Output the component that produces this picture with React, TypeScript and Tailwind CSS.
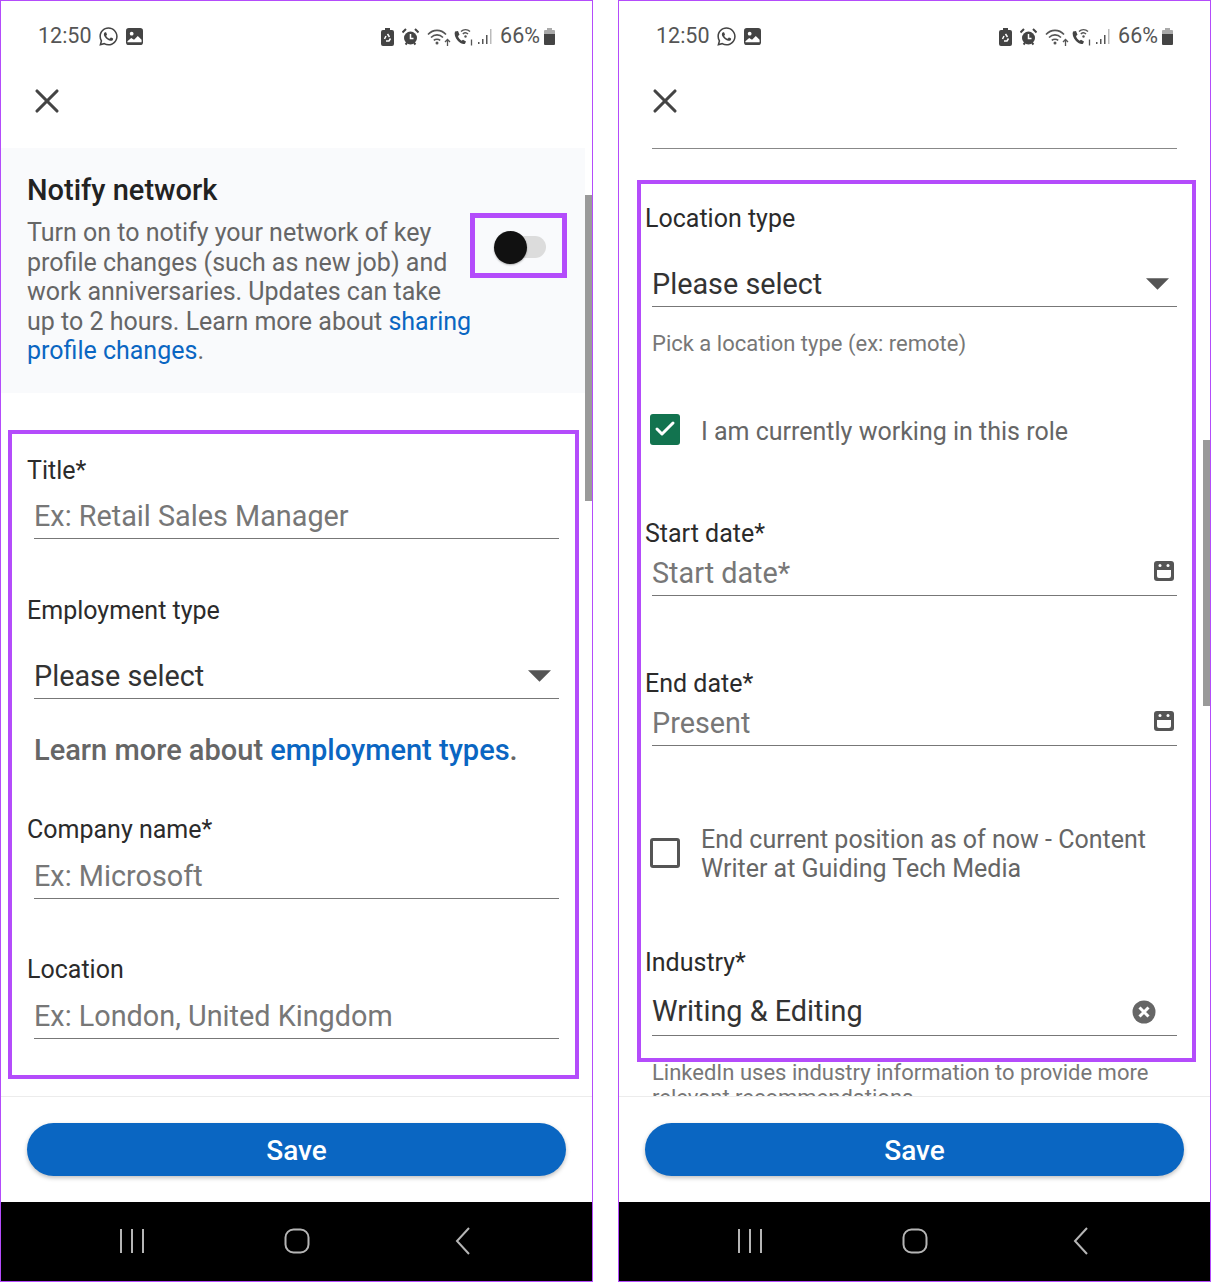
import React from "react"
import { X, Check } from "lucide-react"
import { FaWhatsapp } from "react-icons/fa"

function BatterySaver() {
    return (
        <svg width="13" height="18" viewBox="0 0 13 18">
            <path d="M4 0h5v2h2a2 2 0 0 1 2 2v12a2 2 0 0 1-2 2H2a2 2 0 0 1-2-2V4a2 2 0 0 1 2-2h2z" fill="#444" />
            <path d="M6.500 6l2 3M9.500 10.500l-1.500 2.500H5M3.500 11l1.500-3" stroke="#fff" strokeWidth="1.500" fill="none" />
        </svg>
    )
}

function Alarm() {
    return (
        <svg width="17" height="18" viewBox="0 0 17 18">
            <circle cx="8.500" cy="10" r="6.500" fill="#444" />
            <path d="M0.500 4.500L4 1M16.500 4.500L13 1M3.500 16.500L5 15M13.500 16.500L12 15" stroke="#444" strokeWidth="2" />
            <path d="M8.500 6v4.500h3" stroke="#fff" strokeWidth="1.500" fill="none" />
        </svg>
    )
}

function Wifi() {
    return (
        <svg width="24" height="18" viewBox="0 0 24 18">
            <path d="M1 6.500C6 1 14 1 19 6.500M4 9.500C7.500 6 12.500 6 16 9.500M6.800 12.300C8.500 10.800 11.500 10.800 13.200 12.300" stroke="#555" strokeWidth="1.600" fill="none" />
            <circle cx="10" cy="15" r="1.500" fill="#555" />
            <path d="M20.500 18v-6M18 14l2.500-2.500L23 14" stroke="#555" strokeWidth="1.300" fill="none" />
        </svg>
    )
}

function WifiCall() {
    return (
        <svg width="21" height="18" viewBox="0 0 21 18">
            <path d="M2 3.500C1 6 2 10 5 13c2.500 2.500 5 3.500 7 2.800l1-2.300-3-1.800-1.500 1C7 11.500 5.500 10 5 8l1.500-1.200L5 3z" fill="#444" />
            <path d="M8 3.500C10.500 1 14.500 1 17 3.500M9.800 6C11.300 4.600 13.600 4.600 15 6" stroke="#555" strokeWidth="1.400" fill="none" />
            <circle cx="12.500" cy="8.500" r="1.200" fill="#555" />
            <path d="M18.500 11.500v6" stroke="#555" strokeWidth="1.300" />
        </svg>
    )
}

function Signal() {
    return (
        <svg width="15" height="16" viewBox="0 0 15 16">
            <path d="M1 13h1.500v2H1zM5 10h1.500v5H5zM9 6h1.500v9H9z" fill="#555" />
            <path d="M13 0h1.500v15H13z" fill="#bbb" />
        </svg>
    )
}

function Battery() {
    return (
        <svg width="11" height="17" viewBox="0 0 11 17">
            <path d="M3 0h5v2H3z" fill="#aaa" />
            <path d="M1 2h9a1 1 0 0 1 1 1v3H0V3a1 1 0 0 1 1-1z" fill="#aaa" />
            <path d="M0 6h11v10a1 1 0 0 1-1 1H1a1 1 0 0 1-1-1z" fill="#444" />
        </svg>
    )
}

function Gallery() {
    return (
        <svg width="17" height="17" viewBox="0 0 18 18">
            <rect width="18" height="18" rx="3" fill="#444" />
            <circle cx="6" cy="6" r="2" fill="#fff" />
            <path d="M1.500 14l4-3.500 3 2 4-4 4 4v2.500h-15z" fill="#fff" />
        </svg>
    )
}

function StatusBar() {
    return (
        <div className="h-[71px] shrink-0 flex items-center pl-[37px] pr-[37px] text-[#555]">
            <span className="text-[21.500px]">12:50</span>
            <FaWhatsapp className="ml-[6px] -mt-[1px] text-[#444]" size={21} />
            <span className="ml-[7px] -mt-[1px] flex"><Gallery /></span>
            <div className="ml-auto flex items-center">
                <BatterySaver />
                <span className="ml-[8px] flex"><Alarm /></span>
                <span className="ml-[8px] flex"><Wifi /></span>
                <span className="ml-[2px] flex"><WifiCall /></span>
                <span className="ml-[3px] flex"><Signal /></span>
                <span className="ml-[8px] text-[21.500px]">66%</span>
                <span className="ml-[4px] flex"><Battery /></span>
            </div>
        </div>
    )
}

function Label({ children, className = "" }: { children: React.ReactNode; className?: string }) {
    return <div className={"h-[30px] leading-[32px] text-[25px] text-[#2b2b2b] " + className}>{children}</div>
}

function InputRow({ children, className = "", right }: { children: React.ReactNode; className?: string; right?: React.ReactNode }) {
    return (
        <div className={"h-[44px] flex items-center justify-between border-b border-[#777] text-[28.800px] " + className}>
            <span>{children}</span>
            {right}
        </div>
    )
}

function Caret() {
    return (
        <svg width="23" height="12" viewBox="0 0 24 12" className="mr-[8px] -mt-[1px]">
            <path d="M0 0h24L12 12z" fill="#555" />
        </svg>
    )
}

function CalendarIcon() {
    return (
        <svg width="20" height="20" viewBox="0 0 20 20" className="mr-[3px] -mt-[6px]">
            <path d="M3 0h14a3 3 0 0 1 3 3v14a3 3 0 0 1-3 3H3a3 3 0 0 1-3-3V3a3 3 0 0 1 3-3z" fill="#555" />
            <path d="M3 9h14v6a2 2 0 0 1-2 2H5a2 2 0 0 1-2-2z" fill="#fff" />
            <circle cx="6" cy="4.500" r="1.500" fill="#fff" />
            <circle cx="14" cy="4.500" r="1.500" fill="#fff" />
        </svg>
    )
}

function ClearIcon() {
    return (
        <svg width="24" height="24" viewBox="0 0 24 24" className="mr-[21px]">
            <circle cx="12" cy="12" r="11.500" fill="#666" />
            <path d="M7.500 7.500l9 9M16.500 7.500l-9 9" stroke="#fff" strokeWidth="3" />
        </svg>
    )
}

function Footer() {
    return (
        <div className="shrink-0">
            <div className="h-[106px] border-t border-[#ececec] bg-white px-[26px] pt-[26px]">
                <button className="w-full h-[53px] pt-[2px] rounded-full bg-[#0a66c2] text-white text-[28px] font-medium shadow-[0_2px_4px_rgba(0,0,0,0.25)]" type="button">
                    Save
                </button>
            </div>
            <div className="h-[79px] bg-black flex items-center pl-[118px] pb-[1px]">
                <svg width="26" height="26" viewBox="0 0 26 26">
                    <path d="M2 1v24M13 1v24M24 1v24" stroke="#b5b5b5" strokeWidth="2" />
                </svg>
                <svg width="26" height="26" viewBox="0 0 26 26" className="ml-[139px]">
                    <rect x="1.500" y="1.500" width="23" height="23" rx="8" stroke="#b5b5b5" strokeWidth="2" fill="none" />
                </svg>
                <svg width="16" height="28" viewBox="0 0 16 28" className="ml-[145px]">
                    <path d="M14 1L2 14l12 13" stroke="#b5b5b5" strokeWidth="2" fill="none" />
                </svg>
            </div>
        </div>
    )
}

function Phone({ children, barClass }: { children: React.ReactNode; barClass: string }) {
    return (
        <div className="relative w-[593px] h-[1282px] flex flex-col overflow-hidden border border-[#b44cfb] bg-white">
            <StatusBar />
            <div className="h-[76px] shrink-0 pl-[26px] pt-[9px]">
                <X size={40} strokeWidth={1.900} color="#444" />
            </div>
            <div className="flex-1 min-h-0 overflow-hidden">{children}</div>
            <Footer />
            <div className={"absolute right-0 w-[7px] bg-[#9a9a9a] " + barClass} />
        </div>
    )
}

function LeftForm() {
    return (
        <>
            <section className="h-[245px] mr-[7px] bg-[#f9fafc] flex pl-[26px]">
                <div className="w-[445px] shrink-0 pt-[25px]">
                    <h2 className="h-[34px] leading-[34px] text-[29px] font-medium text-[#222]">Notify network</h2>
                    <p className="mt-[11px] text-[25px] leading-[29.500px] text-[#666] whitespace-nowrap">
                        Turn on to notify your network of key<br />
                        profile changes (such as new job) and<br />
                        work anniversaries. Updates can take<br />
                        up to 2 hours. Learn more about <span className="text-[#0a66c2]">sharing</span><br />
                        <span className="text-[#0a66c2]">profile changes</span>.
                    </p>
                </div>
                <div className="-ml-[2px] mt-[65px] w-[97px] h-[65px] border-[5px] border-[#b44cfb] flex items-center pl-[19px] pt-[3px] shrink-0">
                    <div className="relative w-[52px] h-[33px]">
                        <div className="absolute left-[20px] top-[5px] w-[32px] h-[22px] rounded-full bg-[#dcdcdc]" />
                        <div className="absolute left-0 top-0 w-[33px] h-[33px] rounded-full bg-[#111] shadow-[0_1px_2px_rgba(0,0,0,0.3)]" />
                    </div>
                </div>
            </section>
            <div className="mt-[37px] ml-[7px] w-[571px] h-[649px] border-[4px] border-[#b44cfb] pt-[21px] pl-[15px] pr-[16px]">
                <Label>Title*</Label>
                <InputRow className="mt-[10px] ml-[7px] text-[#777]">Ex: Retail Sales Manager</InputRow>
                <Label className="mt-[56px]">Employment type</Label>
                <InputRow className="mt-[30px] ml-[7px] text-[#333]" right={<Caret />}>Please select</InputRow>
                <div className="mt-[36px] ml-[7px] h-[30px] leading-[30px] text-[29px] font-medium text-[#666] whitespace-nowrap">
                    Learn more about <span className="text-[#0a66c2]">employment types</span>.
                </div>
                <Label className="mt-[49px]">Company name*</Label>
                <InputRow className="mt-[11px] ml-[7px] text-[#777]">Ex: Microsoft</InputRow>
                <Label className="mt-[55px]">Location</Label>
                <InputRow className="mt-[11px] ml-[7px] text-[#777]">Ex: London, United Kingdom</InputRow>
            </div>
        </>
    )
}

function RightForm() {
    return (
        <>
            <div className="ml-[33px] mr-[33px] border-t border-[#888]" />
            <div className="mt-[31px] ml-[18px] w-[559px] h-[882px] border-[4px] border-[#b44cfb] pt-[19px] pl-[4px] pr-[15px]">
                <Label>Location type</Label>
                <InputRow className="mt-[30px] ml-[7px] text-[#333]" right={<Caret />}>Please select</InputRow>
                <div className="mt-[22px] ml-[7px] h-[30px] leading-[30px] text-[22px] text-[#777]">Pick a location type (ex: remote)</div>
                <div className="mt-[55px] ml-[5px] flex items-center h-[32px]">
                    <div className="-mt-[2px] w-[30px] h-[31px] rounded-[3px] bg-[#12734f] flex items-center justify-center">
                        <Check size={24} strokeWidth={3} color="#fff" />
                    </div>
                    <span className="ml-[21px] mt-[3px] text-[25px] text-[#666]">I am currently working in this role</span>
                </div>
                <Label className="mt-[72px]">Start date*</Label>
                <InputRow className="mt-[4px] ml-[7px] text-[#777]" right={<CalendarIcon />}>Start date*</InputRow>
                <Label className="mt-[72px]">End date*</Label>
                <InputRow className="mt-[4px] ml-[7px] text-[#777]" right={<CalendarIcon />}>Present</InputRow>
                <div className="mt-[79px] ml-[5px] flex items-start">
                    <div className="mt-[13px] w-[30px] h-[30px] rounded-[3px] border-[3px] border-[#555]" />
                    <span className="ml-[21px] text-[25px] leading-[29px] text-[#666]">
                        End current position as of now - Content<br />
                        Writer at Guiding Tech Media
                    </span>
                </div>
                <Label className="mt-[64px]">Industry*</Label>
                <InputRow className="mt-[15px] ml-[7px] pb-[4px] text-[#333]" right={<ClearIcon />}>Writing &amp; Editing</InputRow>
            </div>
            <p className="ml-[33px] -mt-[2px] text-[22px] leading-[25px] text-[#777] whitespace-nowrap">
                LinkedIn uses industry information to provide more<br />
                relevant recommendations
            </p>
        </>
    )
}

export default function App() {
    return (
        <div className="w-[1211px] h-[1282px] flex gap-[25px] bg-white font-['Roboto',sans-serif]">
            <Phone barClass="top-[194px] h-[306px]"><LeftForm /></Phone>
            <Phone barClass="top-[439px] h-[266px]"><RightForm /></Phone>
        </div>
    )
}
